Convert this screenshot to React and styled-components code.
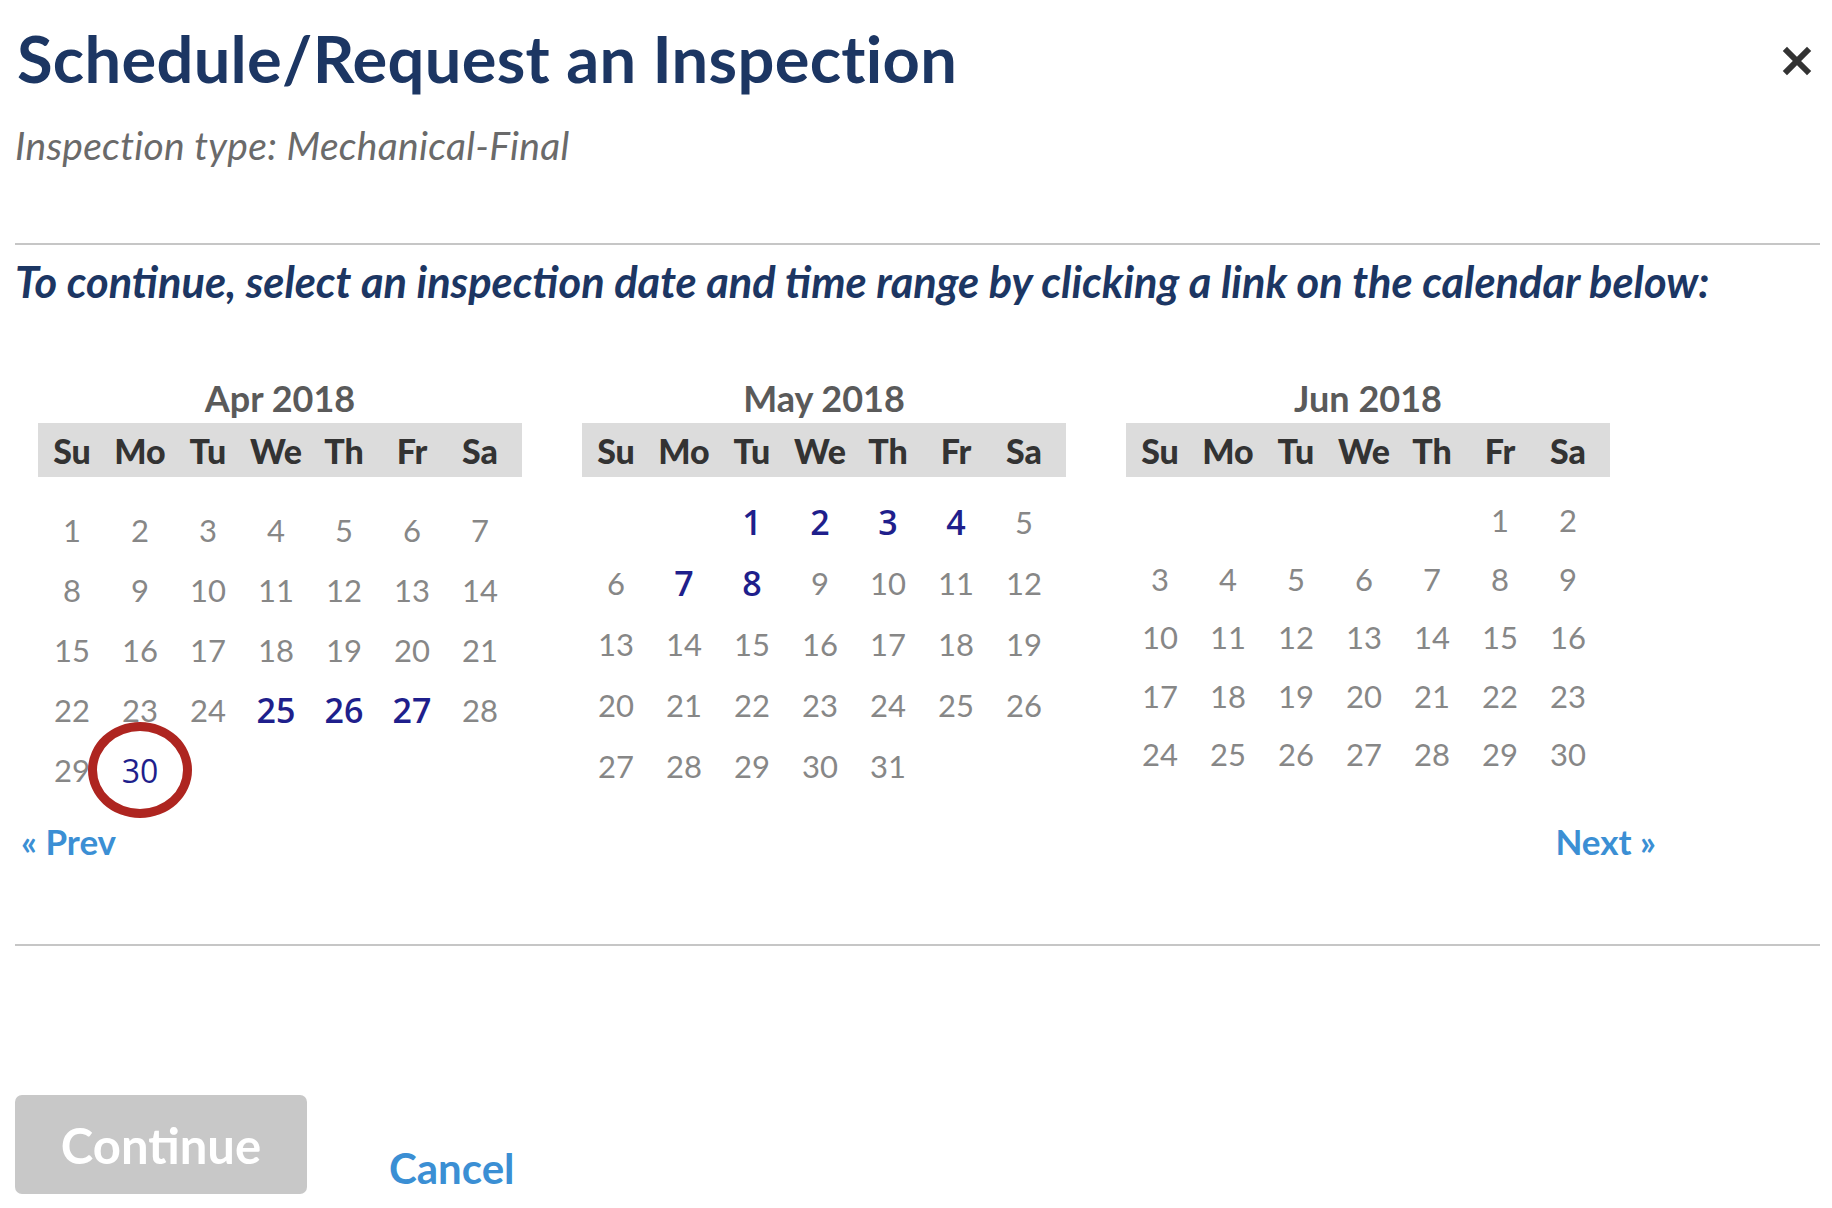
import React from "react";
import styled, { createGlobalStyle } from "styled-components";

const Global = createGlobalStyle`
  html, body { margin: 0; padding: 0; background: #fff; }
  body { font-family: Lato, "Open Sans", sans-serif; }
`;

const Modal = styled.div`
  width: 1832px;
  box-sizing: border-box;
  padding: 0 12px 0 15px;
`;

const Header = styled.div`
  display: flex;
  justify-content: space-between;
  align-items: flex-start;
  padding-top: 20px;
`;

const Title = styled.h1`
  margin: 0 0 0 2px;
  font-size: 65px;
  line-height: 77px;
  font-weight: 700;
  color: #1c3663;
  letter-spacing: 0.3px;
`;

const Close = styled.div`
  margin: 26px 8px 0 0;
  width: 30px;
  height: 30px;
  display: flex;
`;

const Subtitle = styled.div`
  margin-top: 25px;
  font-size: 39px;
  line-height: 46px;
  font-style: italic;
  color: #6a6a6a;
  letter-spacing: 0.3px;
`;

const Divider = styled.hr`
  margin: ${(p) => p.$top}px 0 0 0;
  border: 0;
  height: 2px;
  background: #c6c6c6;
`;

const Instruction = styled.div`
  margin-top: 10px;
  font-size: 43.4px;
  line-height: 52px;
  font-weight: 700;
  font-style: italic;
  color: #1c3663;
`;

const Calendars = styled.div`
  display: flex;
  gap: 60px;
  margin: 70px 0 0 23px;
`;

const Month = styled.div`
  width: 484px;
  display: flex;
  flex-direction: column;
`;

const MonthTitle = styled.div`
  text-align: center;
  font-size: 36px;
  line-height: 42px;
  font-weight: 700;
  color: #5a5a5a;
  margin-bottom: 4px;
`;

const DayBar = styled.div`
  display: grid;
  grid-template-columns: repeat(7, 68px);
  height: 54px;
  align-items: center;
  background: #dcdcdc;
`;

const DayName = styled.div`
  text-align: center;
  font-size: 34px;
  font-weight: 900;
  color: #333;
`;

const Dates = styled.div`
  display: grid;
  grid-template-columns: repeat(7, 68px);
  grid-auto-rows: ${(p) => p.$rowH}px;
  padding-top: ${(p) => p.$padTop}px;
  align-items: center;
`;

const Cell = styled.div`
  position: relative;
  text-align: center;
  font-size: 31px;
  color: #878787;
`;

const DayLink = styled.a`
  font-family: "Open Sans", "Noto Sans", sans-serif;
  font-size: ${(p) => (p.$big ? 34 : 32)}px;
  font-weight: ${(p) => (p.$big ? 600 : 400)};
  color: #1f1f8c;
  text-decoration: none;
  position: relative;
  z-index: 1;
`;

const Ring = styled.span`
  position: absolute;
  left: 50%;
  top: 50%;
  width: 104px;
  height: 96px;
  transform: translate(-50%, -50%);
  border: 9px solid #ae2520;
  border-radius: 50%;
  box-sizing: border-box;
`;

const Nav = styled.div`
  display: flex;
  justify-content: space-between;
  width: 1635px;
  margin: 20px 0 0 6px;
`;

const NavLink = styled.a`
  font-size: 35px;
  line-height: 42px;
  font-weight: 700;
  color: #3b8fd4;
  text-decoration: none;
`;

const Footer = styled.div`
  display: flex;
  align-items: flex-end;
  gap: 82px;
  margin-top: 149px;
`;

const ContinueButton = styled.button`
  width: 292px;
  height: 99px;
  border: 0;
  border-radius: 7px;
  background: #c8c8c8;
  color: #fff;
  font-family: Lato, sans-serif;
  font-size: 49px;
  font-weight: 700;
  padding: 0;
`;

const CancelLink = styled.a`
  font-size: 42px;
  font-weight: 700;
  color: #3b8fd4;
  text-decoration: none;
  line-height: 50px;
  margin-bottom: 1px;
`;

const DAYS = ["Su", "Mo", "Tu", "We", "Th", "Fr", "Sa"];

const months = [
  { name: "Apr 2018", start: 0, days: 30, links: { 25: "big", 26: "big", 27: "big", 30: "ring" }, rowH: 60, padTop: 23 },
  { name: "May 2018", start: 2, days: 31, links: { 1: "big", 2: "big", 3: "big", 4: "big", 7: "big", 8: "big" }, rowH: 61, padTop: 14 },
  { name: "Jun 2018", start: 5, days: 30, links: {}, rowH: 58.5, padTop: 14 },
];

function Calendar({ m }) {
  const cells = [];
  for (let i = 0; i < m.start; i++) cells.push(<Cell key={"e" + i} />);
  for (let d = 1; d <= m.days; d++) {
    const l = m.links[d];
    cells.push(
      <Cell key={d}>
        {l === "ring" && <Ring />}
        {l ? <DayLink href="#" $big={l === "big"}>{d}</DayLink> : d}
      </Cell>
    );
  }
  return (
    <Month>
      <MonthTitle>{m.name}</MonthTitle>
      <DayBar>
        {DAYS.map((d) => (
          <DayName key={d}>{d}</DayName>
        ))}
      </DayBar>
      <Dates $rowH={m.rowH} $padTop={m.padTop}>{cells}</Dates>
    </Month>
  );
}

export default function App() {
  return (
    <>
      <Global />
      <Modal>
        <Header>
          <Title>Schedule/Request an Inspection</Title>
          <Close>
            <svg width="30" height="30" viewBox="0 0 30 30">
              <path d="M5 5 L25 25 M25 5 L5 25" stroke="#333" strokeWidth="6" strokeLinecap="square" />
            </svg>
          </Close>
        </Header>
        <Subtitle>Inspection type: Mechanical-Final</Subtitle>
        <Divider $top={75} />
        <Instruction>
          To continue, select an inspection date and time range by clicking a link on the calendar below:
        </Instruction>
        <Calendars>
          {months.map((m) => (
            <Calendar key={m.name} m={m} />
          ))}
        </Calendars>
        <Nav>
          <NavLink href="#">« Prev</NavLink>
          <NavLink href="#">Next »</NavLink>
        </Nav>
        <Divider $top={82} />
        <Footer>
          <ContinueButton disabled>Continue</ContinueButton>
          <CancelLink href="#">Cancel</CancelLink>
        </Footer>
      </Modal>
    </>
  );
}
